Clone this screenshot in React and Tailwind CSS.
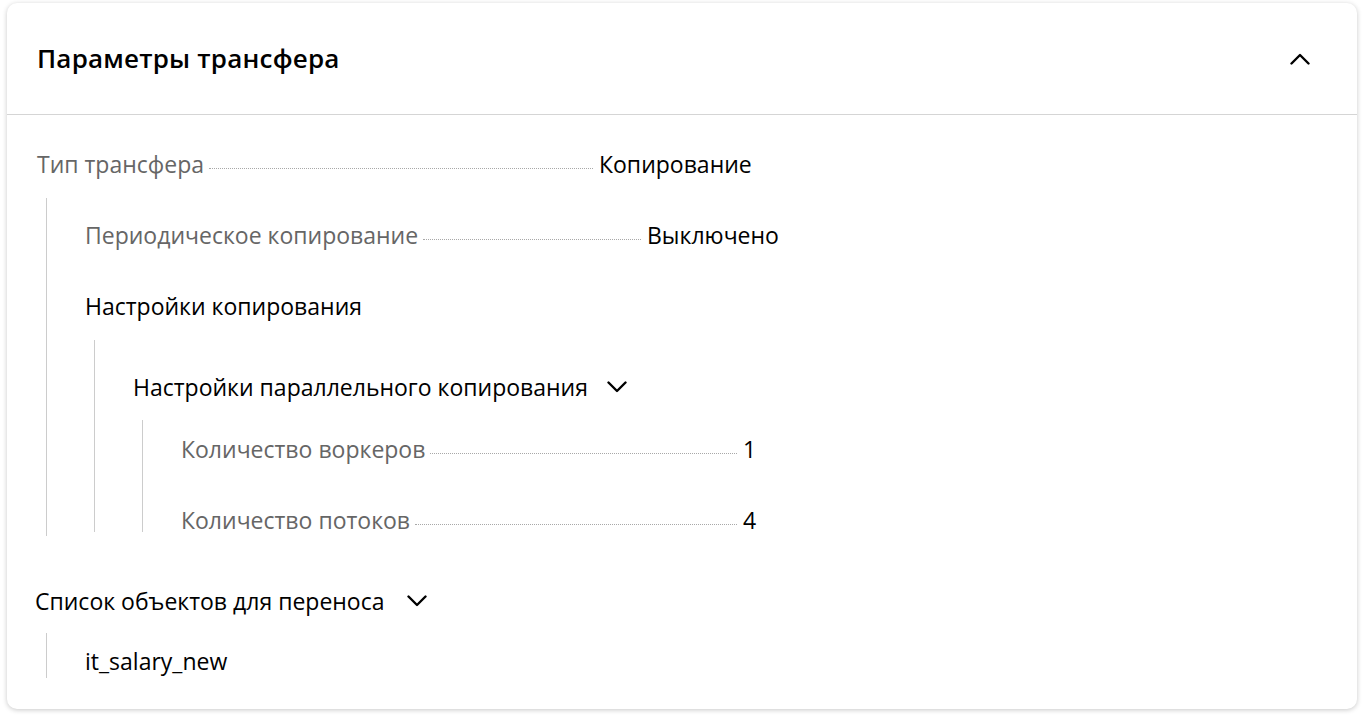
import React from 'react';

const Chevron = ({ up = false, className = '' }) => (
  <svg width="20" height="20" viewBox="0 0 20 20" fill="none" className={className}>
    <path
      d={up ? 'M1.5 14.5L10 6L18.5 14.5' : 'M1.5 5.5L10 14L18.5 5.5'}
      stroke="#000"
      strokeWidth="2.4"
      strokeLinecap="round"
      strokeLinejoin="round"
    />
  </svg>
);

// label ........ value
const Row = ({ label, value }) => (
  <div className="flex items-baseline h-6 leading-6">
    <div className="flex items-baseline w-[556px] shrink-0">
      <span className="text-[#666666] whitespace-nowrap">{label}</span>
      <span className="flex-1 ml-[5px] border-b border-dotted border-[#a8a8a8] translate-y-[-4px]" />
    </div>
    <span className="ml-[6px] text-black whitespace-nowrap">{value}</span>
  </div>
);

const Nested = ({ className = '', children }) => (
  <div className={`pl-[38px] border-l border-[#cccccc] ${className}`}>{children}</div>
);

export default function App() {
  return (
    <div className="min-h-screen bg-white pl-[7px] pt-[3px]" style={{ fontFamily: '"Open Sans", "Noto Sans", sans-serif' }}>
      <div className="w-[1350px] h-[706px] bg-white rounded-[10px] shadow-[0_1px_5px_rgba(0,0,0,0.22)] overflow-hidden">
        {/* Header */}
        <div className="h-[112px] flex items-center justify-between pl-[30px] pr-[47px] border-b border-[#d5d5d5]">
          <h1 className="text-[26px] font-semibold text-black tracking-[0.2px]">Параметры трансфера</h1>
          <Chevron up />
        </div>

        {/* Body */}
        <div className="pl-[30px] pt-[37px] text-[23px]">
          <Row label="Тип трансфера" value="Копирование" />

          <Nested className="ml-[9px] mt-[22px] pt-[25px] pb-[4px]">
            <Row label="Периодическое копирование" value="Выключено" />
            <div className="mt-[47px] h-6 leading-6 text-black">Настройки копирования</div>

            <Nested className="ml-[9px] mt-[22px] pt-[35px]">
              <div className="flex items-center h-6 leading-6 text-black">
                <span>Настройки параллельного копирования</span>
                <Chevron className="ml-[19px]" />
              </div>

              <Nested className="ml-[9px] mt-[21px] pt-[17px]">
                <Row label="Количество воркеров" value="1" />
                <div className="mt-[47px]">
                  <Row label="Количество потоков" value="4" />
                </div>
              </Nested>
            </Nested>
          </Nested>

          <div className="mt-[53px] -ml-[2px] flex items-center h-6 leading-6 text-black">
            <span>Список объектов для переноса</span>
            <Chevron className="ml-[23px]" />
          </div>
          <Nested className="ml-[9px] mt-[20px] pt-[16px] pb-[5px]">
            <div className="h-6 leading-6 text-black">it_salary_new</div>
          </Nested>
        </div>
      </div>
    </div>
  );
}
